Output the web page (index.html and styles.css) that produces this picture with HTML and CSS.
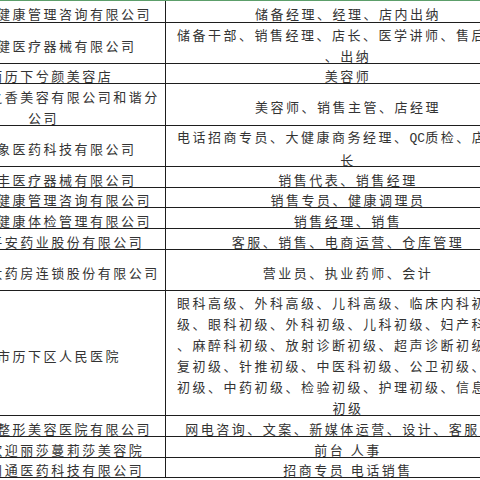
FILE: index.html
```html
<!DOCTYPE html>
<html lang="zh-CN">
<head>
<meta charset="utf-8">
<title>招聘岗位表</title>
<link rel="stylesheet" href="styles.css">
</head>
<body>
<div class="sheet">
  <div class="c l"><div>山东颐和健康管理咨询有限公司</div></div>
  <div class="c r"><div>储备经理、经理、店内出纳</div></div>

  <div class="c l"><div>济南康健医疗器械有限公司</div></div>
  <div class="c r"><div class="full">储备干部、销售经理、店长、医学讲师、售后服务</div><div>、出纳</div></div>

  <div class="c l"><div>济南历下兮颜美容店</div></div>
  <div class="c r"><div>美容师</div></div>

  <div class="c l"><div>济南市丽之香美容有限公司和谐分</div><div>公司</div></div>
  <div class="c r"><div>美容师、销售主管、店经理</div></div>

  <div class="c l"><div>济南万象医药科技有限公司</div></div>
  <div class="c r"><div class="full">电话招商专员、大健康商务经理、<span class="latin">QC</span>质检、店员、店</div><div>长</div></div>

  <div class="c l"><div>济南瑞丰医疗器械有限公司</div></div>
  <div class="c r"><div>销售代表、销售经理</div></div>

  <div class="c l"><div>济南康宁健康管理咨询有限公司</div></div>
  <div class="c r"><div>销售专员、健康调理员</div></div>

  <div class="c l"><div>济南美年健康体检管理有限公司</div></div>
  <div class="c r"><div>销售经理、销售</div></div>

  <div class="c l"><div>山东康平安药业股份有限公司</div></div>
  <div class="c r"><div>客服、销售、电商运营、仓库管理</div></div>

  <div class="c l"><div>漱玉平民大药房连锁股份有限公司</div></div>
  <div class="c r"><div>营业员、执业药师、会计</div></div>

  <div class="c l"><div>济南市历下区人民医院</div></div>
  <div class="c r">
    <div class="full">眼科高级、外科高级、儿科高级、临床内科初级、妇产科高</div>
    <div class="full">级、眼科初级、外科初级、儿科初级、妇产科初级</div>
    <div class="full">、麻醉科初级、放射诊断初级、超声诊断初级、康</div>
    <div class="full">复初级、针推初级、中医科初级、公卫初级、药剂</div>
    <div class="full">初级、中药初级、检验初级、护理初级、信息技术</div>
    <div>初级</div>
  </div>

  <div class="c l"><div>济南华韩整形美容医院有限公司</div></div>
  <div class="c r"><div>网电咨询、文案、新媒体运营、设计、客服专员</div></div>

  <div class="c l"><div>济南市欢迎丽莎蔓莉莎美容院</div></div>
  <div class="c r"><div>前台 人事</div></div>

  <div class="c l"><div>济南九州通医药科技有限公司</div></div>
  <div class="c r"><div>招商专员 电话销售</div></div>
</div>
</body>
</html>
```

FILE: styles.css
```css
html, body {
  margin: 0;
  padding: 0;
  background: #ffffff;
  overflow: hidden;
}

.sheet {
  display: grid;
  grid-template-columns: 244px 364px;
  grid-template-rows: 22px 41px 20px 42px 41px 21px 20px 21px 21px 41px 125px 21px 21px 20px;
  margin-left: -78px;
  border-top: 1px solid #5c9e6a;
  font-family: "Noto Sans CJK SC", "Noto Sans", sans-serif;
  font-size: 13px;
  letter-spacing: 2.5px;
  color: #333333;
}

.c {
  box-sizing: border-box;
  display: flex;
  flex-direction: column;
  justify-content: center;
  min-width: 0;
  padding: 4px 11px 0;
  border-bottom: 1px solid #1e1e1e;
  text-align: center;
  white-space: nowrap;
  line-height: 21px;
}

.c.l {
  padding: 4px 0 0;
  border-right: 1px solid #1e1e1e;
}

.full {
  text-align: left;
}

.latin {
  font-family: "Liberation Mono", monospace;
  letter-spacing: 0;
}
```
